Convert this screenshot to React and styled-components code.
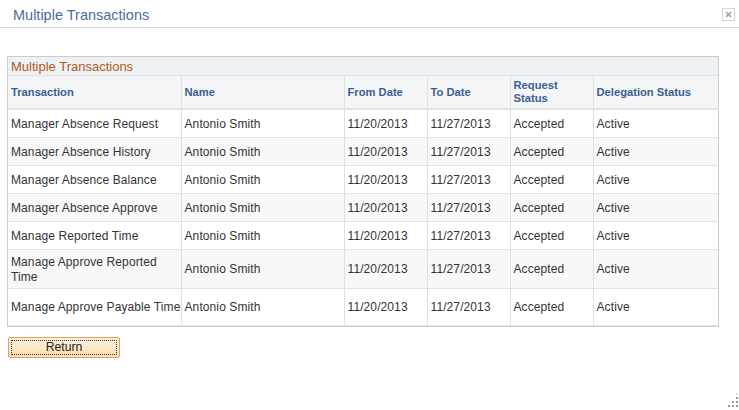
import React from "react";
import styled, { createGlobalStyle } from "styled-components";

const GlobalStyle = createGlobalStyle`
  html, body {
    margin: 0;
    padding: 0;
    background: #ffffff;
    font-family: Arial, "Liberation Sans", sans-serif;
  }
`;

const Page = styled.div`
  position: relative;
  width: 739px;
  height: 410px;
  overflow: hidden;
`;

const TitleBar = styled.div`
  height: 28px;
  border-bottom: 1px solid #d3d6da;
  display: flex;
  align-items: center;
  justify-content: space-between;
  padding: 0 4px 0 13px;
  box-sizing: border-box;
`;

const Title = styled.h1`
  margin: 0;
  font-size: 14.5px;
  font-weight: normal;
  color: #4b6c9c;
  padding-top: 2px;
`;

const CloseBtn = styled.div`
  width: 11px;
  height: 11px;
  border: 1px solid #d8d8d8;
  display: flex;
  align-items: center;
  justify-content: center;
  margin-top: 2px;
`;

const Content = styled.div`
  padding: 28px 0 0 7px;
`;

const GridBox = styled.div`
  width: 712px;
  border: 1px solid #c9cdd1;
  box-sizing: border-box;
`;

const Caption = styled.div`
  height: 18px;
  background: #eff2f4;
  color: #b0581b;
  font-size: 13px;
  line-height: 19px;
  padding-left: 3px;
  border-bottom: 1px solid #e2e4e6;
`;

const Table = styled.table`
  width: 710px;
  border-collapse: collapse;
  table-layout: fixed;
`;

const Th = styled.th`
  height: 32px;
  background: #f4f5f6;
  color: #3a5e92;
  font-size: 11.2px;
  font-weight: bold;
  text-align: left;
  padding: 0 1px 0 3px;
  line-height: 13px;
  border-right: 1px solid #e0e0e0;
  border-bottom: 2px solid #e3e3e3;
  &:last-child {
    border-right: none;
  }
`;

const Row = styled.tr`
  height: ${(p) => p.h}px;
  background: ${(p) => (p.alt ? "#f8f8f8" : "#ffffff")};
`;

const Td = styled.td`
  font-size: 12px;
  letter-spacing: 0.1px;
  color: #333333;
  padding: 2px 1px 0 3px;
  line-height: 15px;
  border-right: 1px solid #e0e0e0;
  border-bottom: 1px solid #e3e3e3;
  &:first-child {
    padding-right: 0;
  }
  &:last-child {
    border-right: none;
  }
`;

const ButtonRow = styled.div`
  padding-top: 10px;
  padding-left: 1px;
`;

const ReturnButton = styled.button`
  width: 112px;
  height: 21px;
  border: 1px solid #e2a360;
  border-radius: 2px;
  background: linear-gradient(#fdf1dc, #fbdcb0);
  padding: 2px;
  font-family: Arial, "Liberation Sans", sans-serif;
  font-size: 12.2px;
  color: #222;
  box-sizing: border-box;
  span {
    display: block;
    height: 100%;
    border: 1px dotted #333;
    line-height: 13px;
    box-sizing: border-box;
  }
`;

const Grip = styled.svg`
  position: absolute;
  right: 1px;
  bottom: 3px;
`;

const columns = [
  { label: "Transaction", w: 173 },
  { label: "Name", w: 163 },
  { label: "From Date", w: 83 },
  { label: "To Date", w: 83 },
  { label: "Request Status", w: 83 },
  { label: "Delegation Status", w: 125 },
];

const rows = [
  ["Manager Absence Request", 28],
  ["Manager Absence History", 28],
  ["Manager Absence Balance", 28],
  ["Manager Absence Approve", 28],
  ["Manage Reported Time", 28],
  ["Manage Approve Reported Time", 39],
  ["Manage Approve Payable Time", 37],
];

const App = () => {
  return (
    <Page>
      <GlobalStyle />
      <TitleBar>
        <Title>Multiple Transactions</Title>
        <CloseBtn>
          <svg width="7" height="7" viewBox="0 0 7 7">
            <path d="M1 1L6 6M6 1L1 6" stroke="#9a9a9a" strokeWidth="1.4" />
          </svg>
        </CloseBtn>
      </TitleBar>
      <Content>
        <GridBox>
          <Caption>Multiple Transactions</Caption>
          <Table>
            <colgroup>
              {columns.map((c) => (
                <col key={c.label} style={{ width: c.w }} />
              ))}
            </colgroup>
            <thead>
              <tr>
                {columns.map((c) => (
                  <Th key={c.label}>
                    {c.label === "Request Status" ? (
                      <>
                        Request
                        <br />
                        Status
                      </>
                    ) : (
                      c.label
                    )}
                  </Th>
                ))}
              </tr>
            </thead>
            <tbody>
              {rows.map(([name, h], i) => (
                <Row key={name} h={h} alt={i % 2 === 1}>
                  <Td>{name}</Td>
                  <Td>Antonio Smith</Td>
                  <Td>11/20/2013</Td>
                  <Td>11/27/2013</Td>
                  <Td>Accepted</Td>
                  <Td>Active</Td>
                </Row>
              ))}
            </tbody>
          </Table>
        </GridBox>
        <ButtonRow>
          <ReturnButton>
            <span>Return</span>
          </ReturnButton>
        </ButtonRow>
      </Content>
      <Grip width="10" height="14" viewBox="0 0 10 14">
        <rect x="8" y="0" width="2" height="2" fill="#dddddd" />
        <rect x="8" y="4" width="2" height="2" fill="#999" />
        <rect x="4" y="8" width="2" height="2" fill="#999" />
        <rect x="8" y="8" width="2" height="2" fill="#999" />
        <rect x="0" y="12" width="2" height="2" fill="#999" />
        <rect x="4" y="12" width="2" height="2" fill="#999" />
        <rect x="8" y="12" width="2" height="2" fill="#999" />
      </Grip>
    </Page>
  );
};

export default App;
